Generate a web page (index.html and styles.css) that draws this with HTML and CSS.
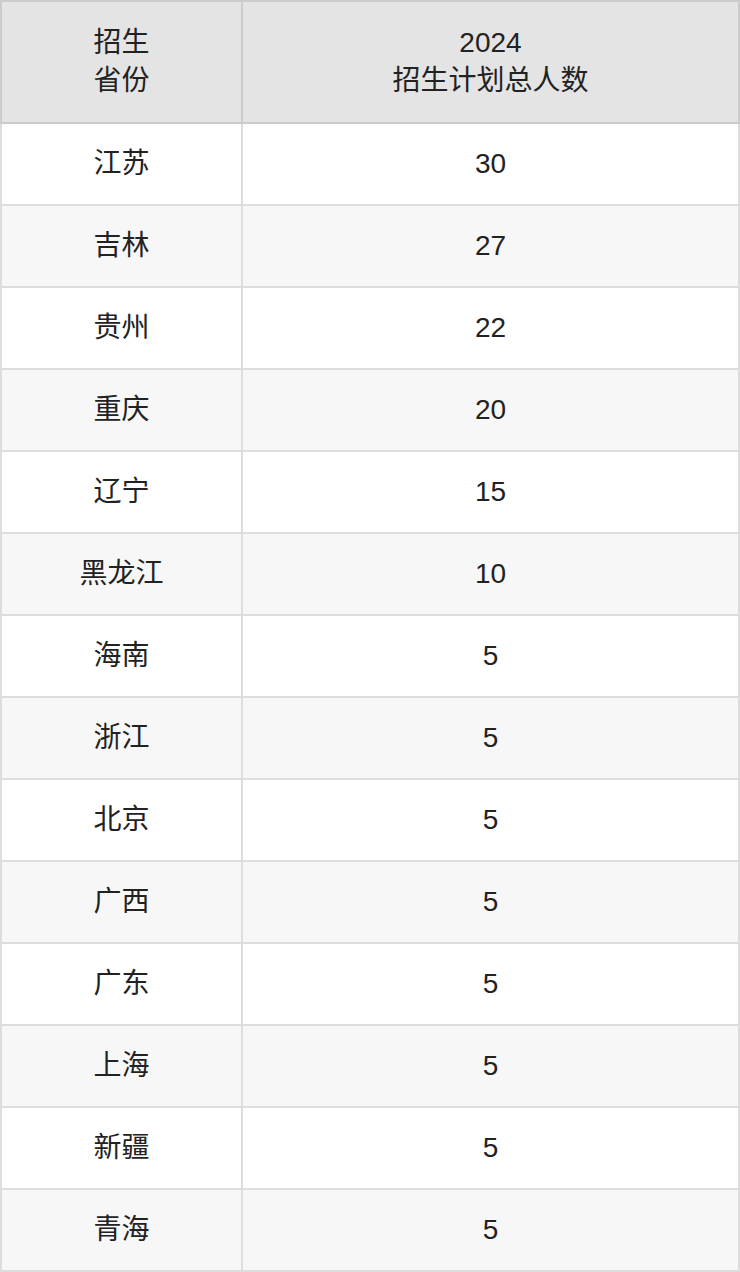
FILE: index.html
```html
<!DOCTYPE html>
<html lang="zh">
<head>
<meta charset="utf-8">
<link rel="stylesheet" href="styles.css">
</head>
<body>
<table class="plan">
  <thead>
    <tr><th class="c1">招生<br>省份</th><th class="c2">2024<br>招生计划总人数</th></tr>
  </thead>
  <tbody>
    <tr><td>江苏</td><td>30</td></tr>
    <tr><td>吉林</td><td>27</td></tr>
    <tr><td>贵州</td><td>22</td></tr>
    <tr><td>重庆</td><td>20</td></tr>
    <tr><td>辽宁</td><td>15</td></tr>
    <tr><td>黑龙江</td><td>10</td></tr>
    <tr><td>海南</td><td>5</td></tr>
    <tr><td>浙江</td><td>5</td></tr>
    <tr><td>北京</td><td>5</td></tr>
    <tr><td>广西</td><td>5</td></tr>
    <tr><td>广东</td><td>5</td></tr>
    <tr><td>上海</td><td>5</td></tr>
    <tr><td>新疆</td><td>5</td></tr>
    <tr><td>青海</td><td>5</td></tr>
  </tbody>
</table>
</body>
</html>
```
FILE: styles.css
```css
html, body {
  margin: 0;
  padding: 0;
  background: #ffffff;
}
.plan {
  width: 740px;
  border-collapse: collapse;
  table-layout: fixed;
  font-family: "Liberation Sans", "Noto Sans CJK SC", sans-serif;
  font-size: 28px;
  color: #222222;
}
.plan th, .plan td {
  text-align: center;
  vertical-align: middle;
  padding: 0;
}
.plan th {
  background: #e4e4e4;
  font-weight: normal;
  height: 120px;
  line-height: 38px;
  border: 2px solid #cccccc;
}
.plan .c1 { width: 239px; }
.plan td {
  height: 80px;
  line-height: 36px;
  border: 2px solid #dddddd;
}
.plan tbody tr:nth-child(even) td {
  background: #f7f7f7;
}
```
